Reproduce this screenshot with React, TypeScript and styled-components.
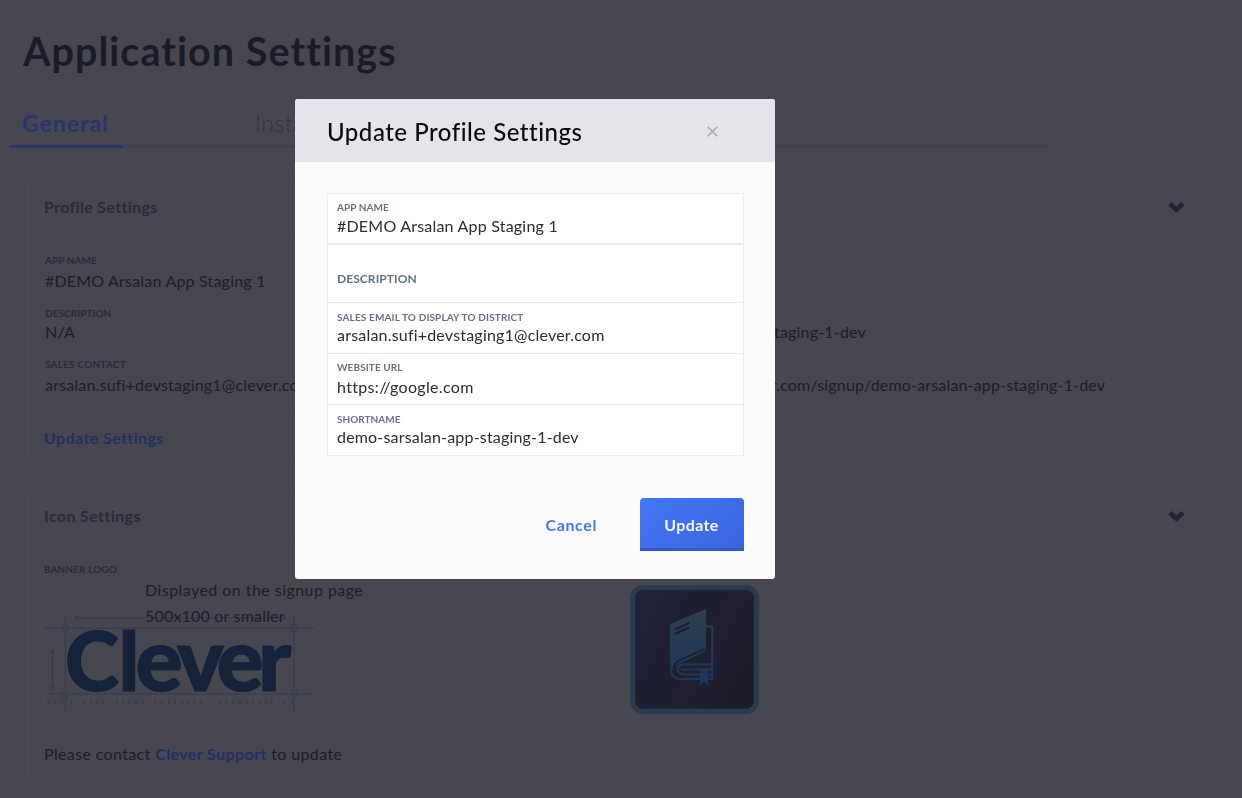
import React from 'react';
import styled, { createGlobalStyle } from 'styled-components';

const color = {
  page: '#474750',
  card: '#474750',
  line: '#42434d',
  tabLine: '#424350',
  heading: '#1b1b28',
  sub: '#2b2b3c',
  text: '#1d1d2b',
  mutedTab: '#323340',
  link: '#252f61',
  tabActive: '#26366f',
  brand: '#14223a',
  guide: '#353e50',
};

const GlobalStyle = createGlobalStyle`
  * { box-sizing: border-box; }
  body {
    margin: 0;
    height: 798px;
    overflow: hidden;
    background: ${color.page};
    font-family: Lato, "Open Sans", sans-serif;
  }
  h1, h2, p, dl, dt, dd { margin: 0; font-weight: inherit; }
`;

const Page = styled.main`
  display: flex;
  flex-direction: column;
  padding: 27px 33px 0 24px;
  width: 1242px;
`;

const PageTitle = styled.h1`
  margin-left: -1px;
  font-size: 39.5px;
  line-height: 48px;
  font-weight: 700;
  letter-spacing: 1.05px;
  color: ${color.heading};
  white-space: nowrap;
`;

const Tabs = styled.nav`
  display: flex;
  gap: 119px;
  margin: 34px 0 0 -15px;
  width: 1043px;
  height: 39px;
  box-shadow: inset 0 -3px ${color.tabLine};
`;

const Tab = styled.a<{ $active?: boolean }>`
  width: 114px;
  padding-left: 13px;
  border-bottom: 3px solid ${p => (p.$active ? color.tabActive : 'transparent')};
  font-size: 23px;
  line-height: 28px;
  font-weight: ${p => (p.$active ? 700 : 300)};
  letter-spacing: ${p => (p.$active ? 0.98 : 0.5)}px;
  color: ${p => (p.$active ? color.tabActive : color.mutedTab)};
  white-space: nowrap;
`;

const Card = styled.section<{ $gap: number; $height: number }>`
  display: flex;
  flex-direction: column;
  margin-top: ${p => p.$gap}px;
  height: ${p => p.$height}px;
  width: 1186px;
  border: 1px solid ${color.line};
  border-radius: 4px;
  background: ${color.card};
`;

const CardHeader = styled.header`
  display: flex;
  align-items: center;
  justify-content: space-between;
  height: 51px;
  padding: 0 24px 0 19px;
  border-bottom: 1px solid ${color.line};
  background: ${color.page};
`;

const CardTitle = styled.h2<{ $track: number }>`
  font-size: 16px;
  line-height: 20px;
  font-weight: 700;
  letter-spacing: ${p => p.$track}px;
  color: ${color.sub};
`;

const CardBody = styled.div`
  flex: 1;
  display: grid;
  grid-template-columns: 586px 1fr;
  padding: 21px 20px 0 20px;
`;

const CardFooter = styled.footer`
  display: flex;
  align-items: center;
  height: 51px;
  padding: 0 19px;
  border-top: 1px solid ${color.line};
  font-size: 16px;
  line-height: 20px;
  letter-spacing: 0.36px;
  color: ${color.text};
  white-space: pre;
`;

const Link = styled.a`
  font-weight: 700;
  letter-spacing: 0.4px;
  color: ${color.link};
`;

const Facts = styled.dl`
  display: grid;
  grid-template-rows: 53px 51px 1fr;
`;

const Fact = styled.div`
  display: flex;
  flex-direction: column;
`;

const FactLabel = styled.dt<{ $track?: number }>`
  display: block;
  font-size: 10px;
  line-height: 12px;
  font-weight: 700;
  letter-spacing: ${p => p.$track ?? 0.05}px;
  color: ${color.sub};
`;

const FactValue = styled.dd<{ $gap?: number; $track?: number }>`
  margin-top: ${p => p.$gap ?? 5}px;
  font-size: 16px;
  line-height: 20px;
  letter-spacing: ${p => p.$track ?? 0.19}px;
  color: ${color.text};
  white-space: nowrap;
`;

const Banner = styled.figure`
  position: relative;
  margin: 0 0 0 -1px;
  width: 330px;
`;

const BannerArt = styled.svg`
  display: block;
  margin-top: 38px;
`;

const BannerCaption = styled.figcaption`
  position: absolute;
  left: 101px;
  top: 14px;
  font-size: 16px;
  line-height: 26px;
  color: ${color.text};
  white-space: nowrap;
`;

const CaptionLine = styled.p<{ $track: number }>`
  letter-spacing: ${p => p.$track}px;
`;

const AppIcon = styled.div`
  margin: 22px 0 0 -1px;
  width: 129px;
  height: 129px;
  padding: 18px 0 0 34px;
  border: 5px solid #2b3b4e;
  border-radius: 13px;
  background: linear-gradient(118deg, #20233a 0%, #1d1e32 35%, #1f1f31 60%, #1b1a2b 100%);
  box-shadow: inset 0 0 0 1px #1f2539;
`;

const Modal = styled.div`
  position: fixed;
  left: 295px;
  top: 99px;
  width: 480px;
  height: 480px;
  border-radius: 3px;
  overflow: hidden;
  background: #fafcfb;
`;

const ModalHeader = styled.header`
  display: flex;
  align-items: center;
  justify-content: space-between;
  height: 63px;
  padding: 3px 57px 0 32px;
  background: #e3e5ea;
`;

const ModalTitle = styled.h2`
  font-size: 24px;
  line-height: 28px;
  font-weight: 500;
  letter-spacing: 0.52px;
  color: #0b0b0d;
  white-space: nowrap;
`;

const CloseButton = styled.button`
  display: flex;
  margin-top: -2px;
  padding: 0;
  border: 0;
  background: none;
`;

const Form = styled.form`
  margin: 31px 31px 0 32px;
`;

const Fields = styled.div`
  width: 417px;
  border: 1px solid #eceeef;
  background: #fff;
`;

const Field = styled.label<{ $height: number; $pad: number; $rule?: number }>`
  display: block;
  height: ${p => p.$height}px;
  padding: ${p => p.$pad}px 9px 0;
  border-bottom: ${p => p.$rule ?? 1}px solid #e9ebed;
`;

const FieldLabel = styled.span<{ $large?: boolean; $track: number }>`
  display: block;
  font-size: ${p => (p.$large ? 12 : 10)}px;
  line-height: ${p => (p.$large ? 14 : 12)}px;
  font-weight: 700;
  letter-spacing: ${p => p.$track}px;
  color: #65718b;
`;

const FieldValue = styled.span<{ $gap: number; $track: number }>`
  display: block;
  margin-top: ${p => p.$gap}px;
  font-size: 16px;
  line-height: 20px;
  letter-spacing: ${p => p.$track}px;
  color: #2b2b3a;
`;

const Actions = styled.div`
  display: flex;
  justify-content: flex-end;
  align-items: center;
  gap: 43px;
  margin-top: 42px;
`;

const CancelButton = styled.button`
  padding: 0;
  border: 0;
  background: none;
  font: 700 16px/20px Lato, sans-serif;
  letter-spacing: 0.6px;
  color: #4776f6;
`;

const UpdateButton = styled.button`
  width: 104px;
  height: 53px;
  padding: 0 1px 0 0;
  border: 0;
  border-radius: 4px 4px 1px 1px;
  background: linear-gradient(135deg, #4377f8, #3a64da);
  box-shadow: inset 0 -3px #3158c6;
  font: 700 16px/20px Lato, sans-serif;
  letter-spacing: 0.4px;
  color: #f4f7ff;
`;

const ChevronDown = () => (
  <svg width="17" height="12" viewBox="0 0 17 12">
    <path d="M2 2.800 8.500 8.600 15 2.800" fill="none" stroke="#242336" strokeWidth="4.600" />
  </svg>
);

const CloseIcon = () => (
  <svg width="11" height="11" viewBox="0 0 11 11">
    <path d="M.7.7l9.6 9.6M10.3.7.7 10.3" stroke="#a4a9b7" strokeWidth="1.5" />
  </svg>
);

const TICKS = [
  4, 10.7, 18, 27.7, 40.3, 46.7, 53, 59.7, 72.7, 78.7, 85.3, 92, 98.7, 111.3, 117.7, 124.7, 131.3,
  138, 144, 150.3, 157.3, 175.7, 182.3, 189.3, 196, 202.7, 209, 215.7, 221.7, 228, 240.3, 247.7,
];

const BannerLogo = () => (
  <BannerArt width="270" height="98" viewBox="0 0 270 98">
    <g stroke={color.guide} strokeWidth="1.2" fill="none">
      <path d="M0 15.2h270M0 81h270M21.5 2v96M250 2v96" />
      <path d="M33 4.8h206M8.5 38v36" />
      <circle cx="21.5" cy="15.2" r="3.4" />
      <circle cx="250" cy="15.2" r="3.4" />
      <circle cx="21.5" cy="81.4" r="3.4" />
      <circle cx="250" cy="80" r="3.4" />
    </g>
    <path
      fill={color.guide}
      d="M30 4.8l4-2.2v4.4zM243 4.8l-4-2.2v4.4zM8.5 35.5l-2.2 4h4.4zM8.5 77.5l-2.2-4h4.4z"
    />
    <path d={TICKS.map(x => `M${x} 86.8v4.2`).join('')} stroke={color.guide} strokeWidth="1.3" />
    <text
      x="21 74.5 91.5 133 172.500 214"
      y="77.5"
      fill={color.brand}
      stroke={color.brand}
      strokeWidth="1.2"
      fontFamily="Lato, sans-serif"
      fontWeight="900"
      fontSize="82"
    >
      Cl<tspan fontSize="88">ever</tspan>
    </text>
  </BannerArt>
);

const BookIcon = () => (
  <svg width="46" height="78" viewBox="0 0 46 78">
    <defs>
      <linearGradient id="book" x1="0" y1="0" x2="0" y2="78" gradientUnits="userSpaceOnUse">
        <stop offset="0" stopColor="#2c404d" />
        <stop offset="1" stopColor="#1d335c" />
      </linearGradient>
    </defs>
    <path d="M1 16 37 1v42L9 56Q5 58 3.5 62H1z" fill="url(#book)" />
    <path
      d="M37 18.5h6.2V71H12Q2 71 2 60V50M43 56.500H14Q8.500 57 8.500 61T14 66.500H43M43 61.500H12"
      fill="none"
      stroke="url(#book)"
      strokeWidth="2"
    />
    <path d="M4.500 61Q5 54 12 51.500L36 40.800" fill="none" stroke="#1c1d30" strokeWidth="1.800" />
    <path d="M6 21.500 20 15M6 26 20 19.500" stroke="#1c1d30" strokeWidth="2" />
    <path d="M31 60h8v17l-4-4-4 4z" fill="#1f3457" />
  </svg>
);

export default function App() {
  return (
    <>
      <GlobalStyle />
      <Page>
        <PageTitle>Application Settings</PageTitle>
        <Tabs>
          <Tab $active>General</Tab>
          <Tab>Install</Tab>
        </Tabs>

        <Card $gap={33} $height={283}>
          <CardHeader>
            <CardTitle $track={0.32}>Profile Settings</CardTitle>
            <ChevronDown />
          </CardHeader>
          <CardBody>
            <Facts>
              <Fact>
                <FactLabel>APP NAME</FactLabel>
                <FactValue $track={0.2}>#DEMO Arsalan App Staging 1</FactValue>
              </Fact>
              <Fact>
                <FactLabel>DESCRIPTION</FactLabel>
                <FactValue $gap={3}>N/A</FactValue>
              </Fact>
              <Fact>
                <FactLabel $track={0.22}>SALES CONTACT</FactLabel>
                <FactValue>arsalan.sufi+devstaging1@clever.com</FactValue>
              </Fact>
            </Facts>
            <Facts>
              <Fact />
              <Fact>
                <FactLabel>SHORTNAME</FactLabel>
                <FactValue $gap={3}>demo-arsalan-app-staging-1-dev</FactValue>
              </Fact>
              <Fact>
                <FactLabel>SIGNUP URL</FactLabel>
                <FactValue $track={0.175}>https://signup.clever.com/signup/demo-arsalan-app-staging-1-dev</FactValue>
              </Fact>
            </Facts>
          </CardBody>
          <CardFooter>
            <Link>Update Settings</Link>
          </CardFooter>
        </Card>

        <Card $gap={26} $height={290}>
          <CardHeader>
            <CardTitle $track={0.38}>Icon Settings</CardTitle>
            <ChevronDown />
          </CardHeader>
          <CardBody>
            <Banner>
              <FactLabel as="span" $track={0.1}>BANNER LOGO</FactLabel>
              <BannerLogo />
              <BannerCaption>
                <CaptionLine $track={0.45}>Displayed on the signup page</CaptionLine>
                <CaptionLine $track={0.2}>500x100 or smaller</CaptionLine>
              </BannerCaption>
            </Banner>
            <AppIcon>
              <BookIcon />
            </AppIcon>
          </CardBody>
          <CardFooter>
            Please contact <Link>Clever Support</Link> to update
          </CardFooter>
        </Card>
      </Page>

      <Modal role="dialog">
        <ModalHeader>
          <ModalTitle>Update Profile Settings</ModalTitle>
          <CloseButton aria-label="Close">
            <CloseIcon />
          </CloseButton>
        </ModalHeader>
        <Form>
          <Fields>
            <Field $height={51} $pad={7} $rule={2}>
              <FieldLabel $track={0.05}>APP NAME</FieldLabel>
              <FieldValue $gap={3} $track={0.21}>#DEMO Arsalan App Staging 1</FieldValue>
            </Field>
            <Field $height={58} $pad={27}>
              <FieldLabel $large $track={0.08}>DESCRIPTION</FieldLabel>
            </Field>
            <Field $height={51} $pad={8}>
              <FieldLabel $track={0.14}>SALES EMAIL TO DISPLAY TO DISTRICT</FieldLabel>
              <FieldValue $gap={2} $track={0.2}>arsalan.sufi+devstaging1@clever.com</FieldValue>
            </Field>
            <Field $height={51} $pad={7}>
              <FieldLabel $track={0.1}>WEBSITE URL</FieldLabel>
              <FieldValue $gap={4} $track={0.33}>https://google.com</FieldValue>
            </Field>
            <Field $height={50} $pad={8} $rule={0}>
              <FieldLabel $track={0.02}>SHORTNAME</FieldLabel>
              <FieldValue $gap={2} $track={0.18}>demo-sarsalan-app-staging-1-dev</FieldValue>
            </Field>
          </Fields>
          <Actions>
            <CancelButton type="button">Cancel</CancelButton>
            <UpdateButton type="button">Update</UpdateButton>
          </Actions>
        </Form>
      </Modal>
    </>
  );
}
